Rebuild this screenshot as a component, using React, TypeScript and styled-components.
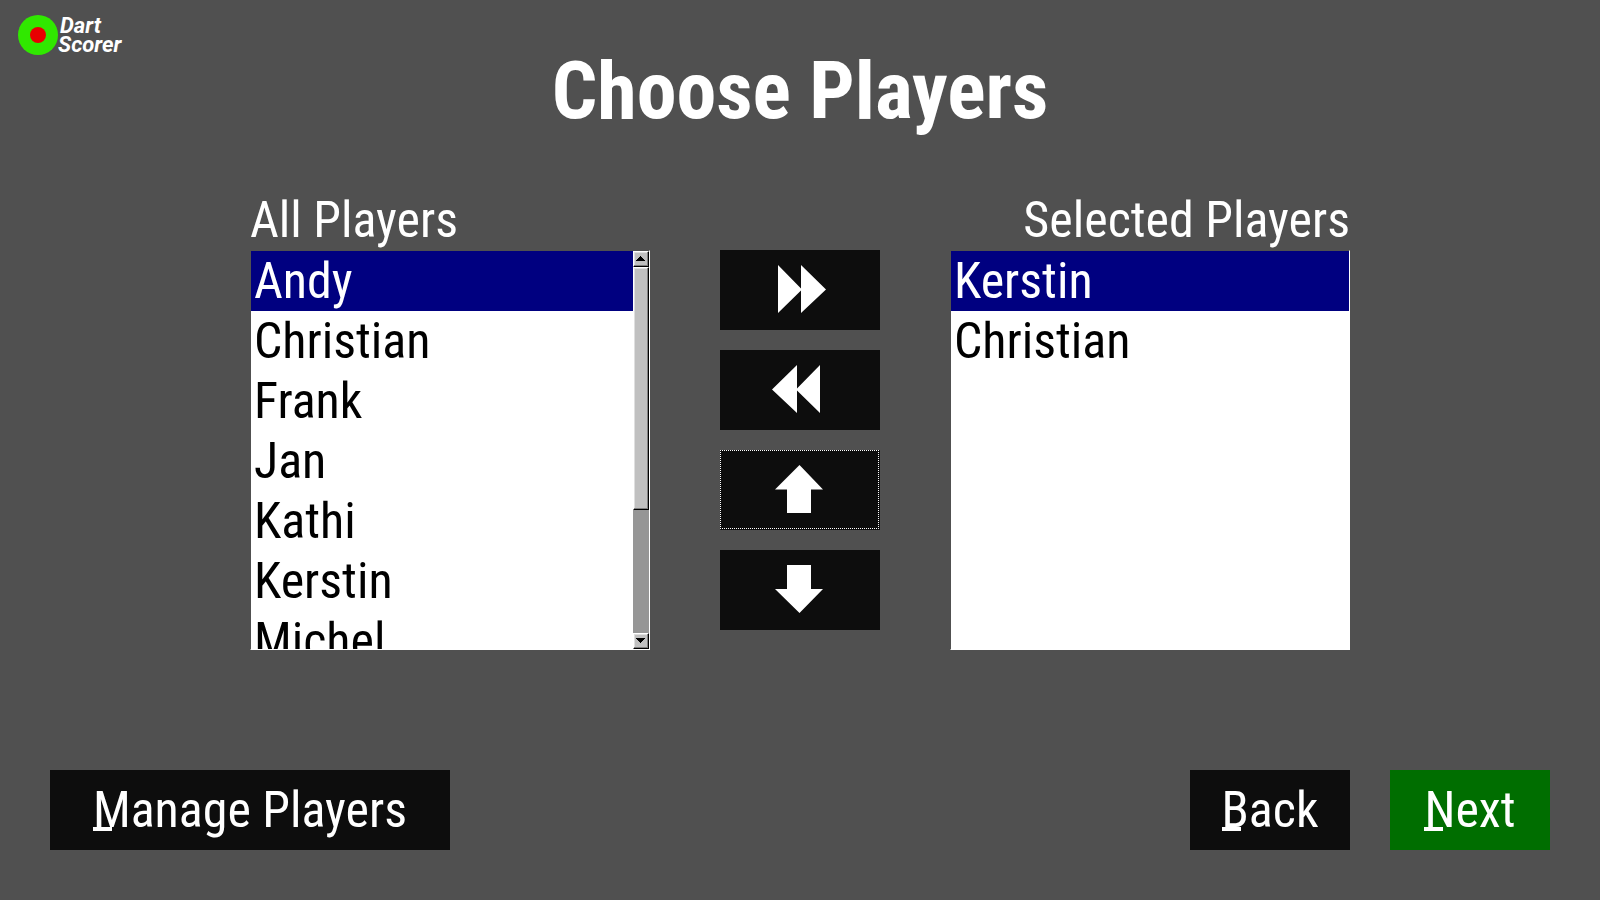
import React, { useRef, useState } from "react";
import styled, { createGlobalStyle } from "styled-components";

const GlobalStyle = createGlobalStyle`
  *, *::before, *::after { box-sizing: border-box; }
  body {
    margin: 0;
    background: #505050;
    color: #fff;
    font-family: "Roboto Condensed", Roboto, "Liberation Sans Narrow", sans-serif;
  }
`;

const Page = styled.div`
  display: flex;
  flex-direction: column;
  min-height: 100vh;
  padding: 0 50px 50px;
`;

const Brand = styled.svg`
  position: absolute;
  top: 12px;
  left: 16px;
`;

const Title = styled.h1`
  margin: 40px 0 48px;
  font-size: 80px;
  line-height: 102px;
  font-weight: 700;
  text-align: center;
`;

const Chooser = styled.main`
  display: flex;
  justify-content: center;
  gap: 70px;
`;

const Panel = styled.section`
  display: flex;
  flex-direction: column;
  width: 400px;
`;

const PanelLabel = styled.label<{ $align: "left" | "right" }>`
  font-size: 50px;
  line-height: 60px;
  text-align: ${(p) => p.$align};
  white-space: nowrap;
`;

const ListFrame = styled.div`
  display: flex;
  height: 400px;
  background: #fff;
  border: 1px solid;
  border-color: #505050 #fff #fff #505050;
`;

const List = styled.select`
  flex: 1;
  min-width: 0;
  height: 100%;
  margin: 0;
  padding: 0;
  border: 0;
  border-radius: 0;
  outline: 0;
  background: #fff;
  color: #000;
  font: inherit;
  font-size: 50px;
  line-height: 60px;
  overflow-y: auto;
  scrollbar-width: none;
`;

const Item = styled.option`
  height: 60px;
  min-height: 60px;
  padding: 1px 3px 0;
  font-size: 50px;
  line-height: 60px;
  color: #000;

  &:checked {
    background: #000080 linear-gradient(#000080, #000080);
    color: #fff;
    -webkit-text-fill-color: #fff;
  }
`;

const ScrollBar = styled.div`
  display: flex;
  flex-direction: column;
  width: 16px;
  background: #969696;
`;

const raised = `
  background: #c0c0c0;
  border: 1px solid;
  border-color: #fff #000 #000 #fff;
  box-shadow: inset -1px -1px #808080, inset 1px 1px #dfdfdf;
`;

const ScrollButton = styled.button`
  display: flex;
  align-items: center;
  justify-content: center;
  width: 16px;
  height: 16px;
  padding: 0 1px 1px 0;
  ${raised}
`;

const Track = styled.div`
  flex: 1;
`;

const Thumb = styled.div`
  width: 16px;
  ${raised}
`;

const Moves = styled.div`
  display: flex;
  flex-direction: column;
  gap: 20px;
  padding-top: 60px;
`;

const Button = styled.button<{ $wide?: boolean; $primary?: boolean }>`
  display: flex;
  align-items: center;
  justify-content: center;
  width: ${(p) => (p.$wide ? 400 : 160)}px;
  height: 80px;
  padding: 0;
  border: 0;
  background: ${(p) => (p.$primary ? "#006e00" : "#0d0d0d")};
  color: #fff;
  font: inherit;
  font-size: 50px;
  line-height: 60px;
  white-space: nowrap;
`;

const MoveButton = styled(Button)<{ $focused?: boolean }>`
  position: relative;

  &::after {
    content: "";
    display: ${(p) => (p.$focused ? "block" : "none")};
    position: absolute;
    inset: 0 1px 1px 0;
    background:
      repeating-linear-gradient(90deg, #fff 0 1px, transparent 1px 2px) top / 100% 1px no-repeat,
      repeating-linear-gradient(90deg, #fff 0 1px, transparent 1px 2px) bottom / 100% 1px no-repeat,
      repeating-linear-gradient(#fff 0 1px, transparent 1px 2px) left / 1px 100% no-repeat,
      repeating-linear-gradient(#fff 0 1px, transparent 1px 2px) right / 1px 100% no-repeat;
  }
`;

const Mnemonic = styled.span`
  position: relative;

  &::after {
    content: "";
    position: absolute;
    left: 0;
    bottom: 8px;
    width: 19px;
    height: 4px;
    background: #fff;
  }
`;

const Footer = styled.footer`
  display: flex;
  justify-content: space-between;
  margin-top: auto;
  padding-top: 50px;
`;

const FooterGroup = styled.div`
  display: flex;
  gap: 40px;
`;

const ALL = ["Andy", "Christian", "Frank", "Jan", "Kathi", "Kerstin", "Michel", "Nico", "Peter", "Thomas"];
const ROW = 60;
const VIEW = 398;
const TRACK = 366;
const THUMB = 243;

const MOVES = [
  { label: "Add player", d: "M58 15 L81 38.5 V15 L106 39.5 L81 63 V40.5 L58 63 Z" },
  { label: "Remove player", d: "M100 15 V63 L77 40.5 V63 L52 39.5 L77 15 V38.5 Z" },
  { label: "Move up", d: "M79.5 15 L103 39.5 H91 V63 H67 V39.5 H55 Z", focused: true },
  { label: "Move down", d: "M67 15 H91 V39 H103 L79.5 63 L55 39 H67 Z" },
];

export default function App() {
  const allRef = useRef<HTMLSelectElement>(null);
  const [scroll, setScroll] = useState(0);
  const maxScroll = ALL.length * ROW - VIEW;
  const offset = Math.round(Math.min(1, scroll / maxScroll) * (TRACK - THUMB));
  const step = (dy: number) => allRef.current?.scrollBy(0, dy);

  return (
    <Page>
      <GlobalStyle />
      <Brand width="120" height="48" viewBox="16 12 120 48" role="img" aria-label="Dart Scorer">
        <circle cx="38" cy="35" r="20" fill="#30e800" />
        <circle cx="38" cy="35" r="8" fill="#e80000" />
        <g fill="#fff" fontFamily="Roboto, sans-serif" fontWeight="700" fontStyle="italic" fontSize="22">
          <text x="60" y="33">Dart</text>
          <text x="58" y="52">Scorer</text>
        </g>
      </Brand>
      <Title>Choose Players</Title>
      <Chooser>
        <Panel>
          <PanelLabel htmlFor="all" $align="left">All Players</PanelLabel>
          <ListFrame>
            <List id="all" ref={allRef} size={6} defaultValue="Andy" onScroll={(e) => setScroll(e.currentTarget.scrollTop)}>
              {ALL.map((n) => <Item key={n}>{n}</Item>)}
            </List>
            <ScrollBar>
              <ScrollButton type="button" aria-label="Scroll up" onClick={() => step(-ROW)}>
                <svg width="9" height="5" viewBox="0 0 9 5" shapeRendering="crispEdges"><path d="M4 0h1v1h1v1h1v1h1v1h1v1H0V4h1V3h1V2h1V1h1z" /></svg>
              </ScrollButton>
              <Track>
                <Thumb style={{ height: THUMB, marginTop: offset }} />
              </Track>
              <ScrollButton type="button" aria-label="Scroll down" onClick={() => step(ROW)}>
                <svg width="9" height="5" viewBox="0 0 9 5" shapeRendering="crispEdges"><path d="M0 0h9v1H8v1H7v1H6v1H5v1H4V4H3V3H2V2H1V1H0z" /></svg>
              </ScrollButton>
            </ScrollBar>
          </ListFrame>
        </Panel>
        <Moves>
          {MOVES.map((m) => (
            <MoveButton key={m.label} type="button" aria-label={m.label} $focused={m.focused}>
              <svg width="160" height="80" viewBox="0 0 160 80"><path d={m.d} fill="#fff" /></svg>
            </MoveButton>
          ))}
        </Moves>
        <Panel>
          <PanelLabel htmlFor="selected" $align="right">Selected Players</PanelLabel>
          <ListFrame>
            <List id="selected" size={6} defaultValue="Kerstin">
              <Item>Kerstin</Item>
              <Item>Christian</Item>
            </List>
          </ListFrame>
        </Panel>
      </Chooser>
      <Footer>
        <Button type="button" $wide><span><Mnemonic>M</Mnemonic>anage Players</span></Button>
        <FooterGroup>
          <Button type="button"><span><Mnemonic>B</Mnemonic>ack</span></Button>
          <Button type="button" $primary><span><Mnemonic>N</Mnemonic>ext</span></Button>
        </FooterGroup>
      </Footer>
    </Page>
  );
}
